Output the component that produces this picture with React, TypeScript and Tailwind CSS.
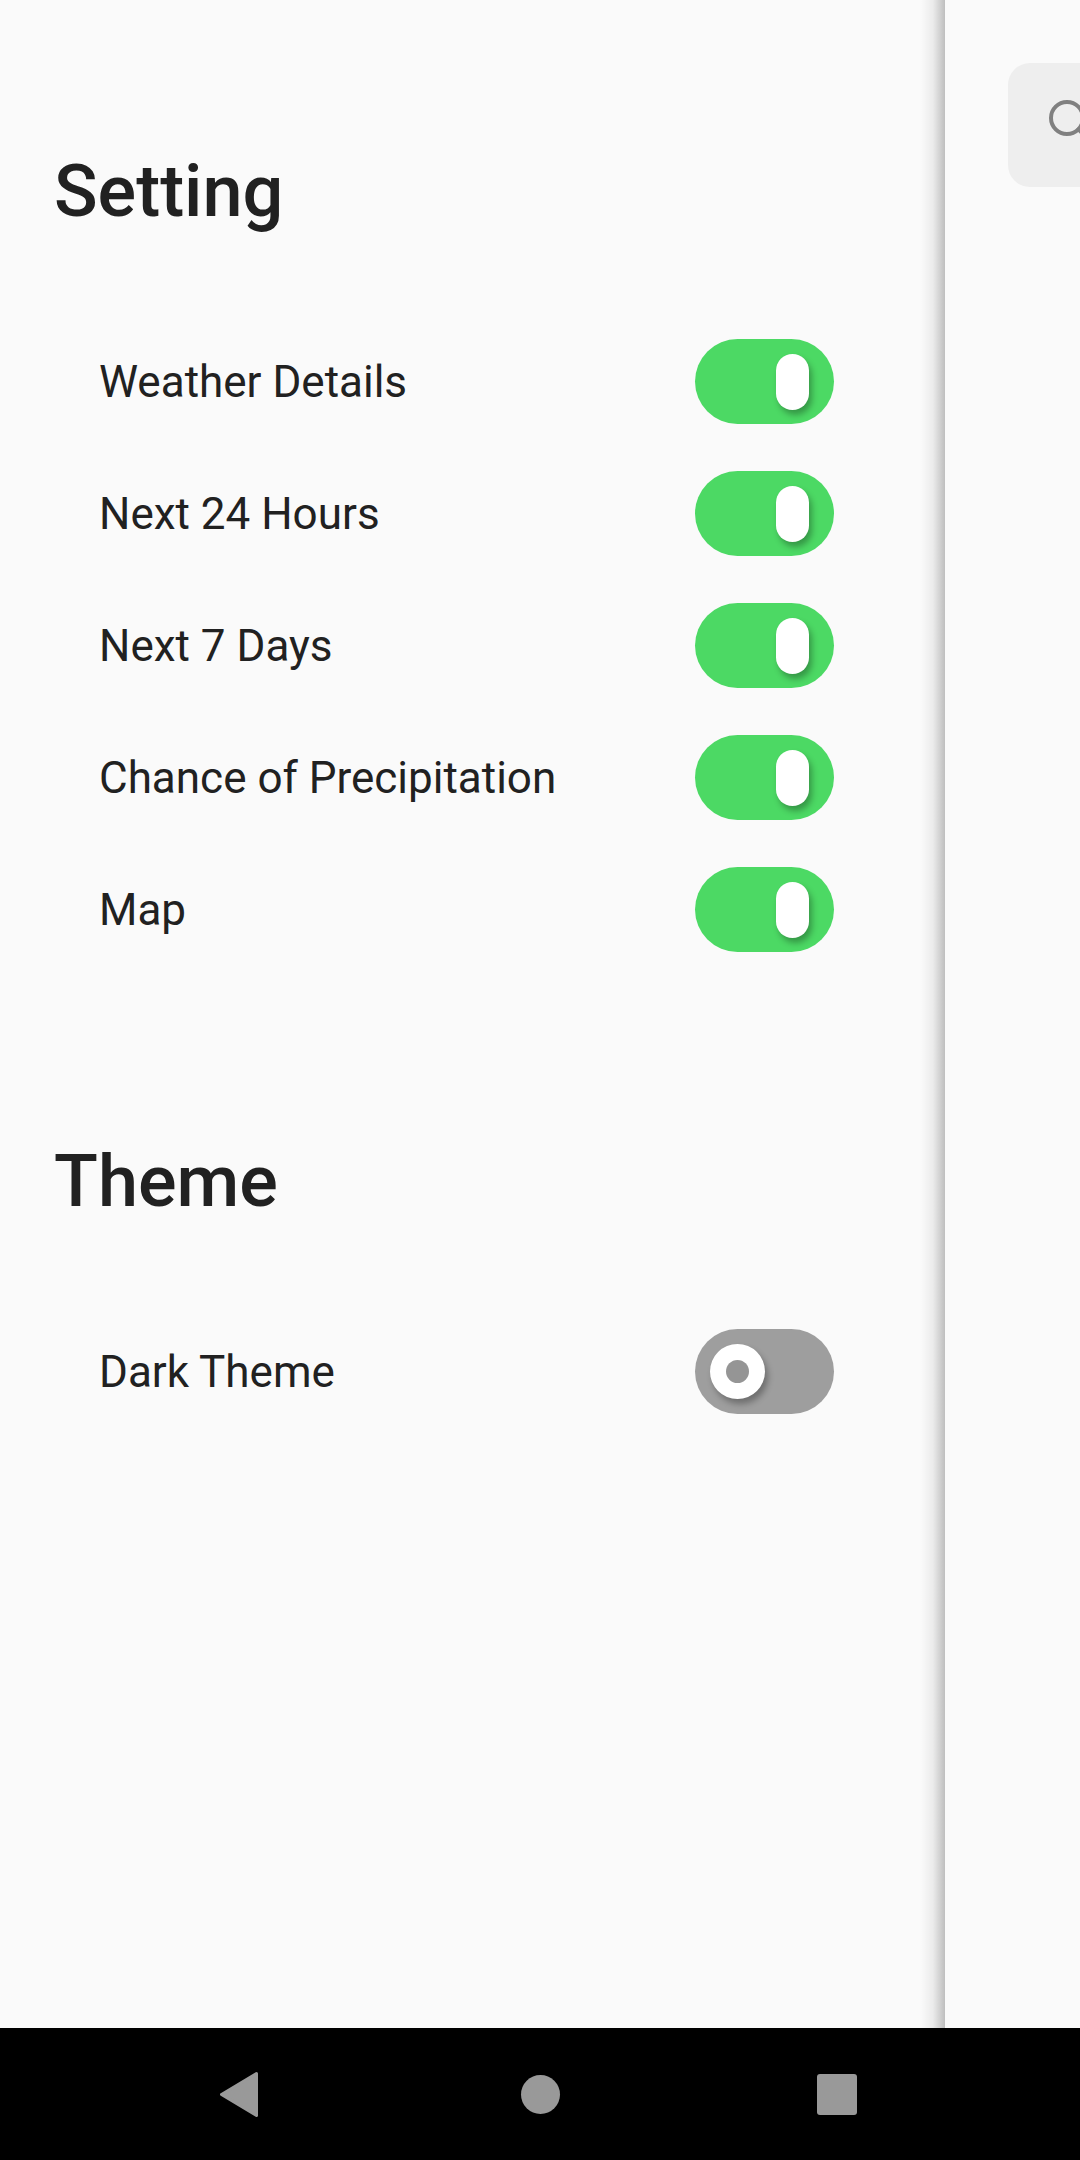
import React from 'react';
import { Search } from 'lucide-react';

const settingItems = ['Weather Details', 'Next 24 Hours', 'Next 7 Days', 'Chance of Precipitation', 'Map'];

const SwitchOn: React.FC = () => (
  <div className="w-[139px] h-[85px] rounded-full bg-[#4cd964] flex items-center justify-end pr-[25px]">
    <div className="w-[33px] h-[56px] rounded-full bg-white shadow-[3px_5px_6px_rgba(0,0,0,0.3)]" />
  </div>
);

const SwitchOff: React.FC = () => (
  <div className="w-[139px] h-[85px] rounded-full bg-[#9e9e9e] flex items-center pl-[15px]">
    <div className="w-[55px] h-[55px] rounded-full bg-white flex items-center justify-center shadow-[3px_5px_6px_rgba(0,0,0,0.3)]">
      <div className="w-[23px] h-[23px] rounded-full bg-[#959595]" />
    </div>
  </div>
);

const Row: React.FC<{ label: string; on: boolean }> = ({ label, on }) => (
  <div className="h-[132px] flex items-center justify-between pl-[99px] pr-[111px]">
    <span className="text-[44px] leading-none text-[#212121]">{label}</span>
    {on ? <SwitchOn /> : <SwitchOff />}
  </div>
);

export default function App() {
  return (
    <div
      className="w-[1080px] h-[2160px] flex flex-col bg-[#fafafa] overflow-hidden"
      style={{ fontFamily: 'Roboto, "Noto Sans", sans-serif' }}
    >
      <div className="flex flex-1 min-h-0">
        {/* Drawer */}
        <aside className="relative w-[945px] shrink-0">
          <h1 className="pl-[54px] pt-[156px] text-[72px] leading-none font-medium text-[#212121]">Setting</h1>
          <div className="mt-[87.5px]">
            {settingItems.map((item) => (
              <Row key={item} label={item} on />
            ))}
          </div>
          <h1 className="pl-[54px] mt-[170.5px] text-[72px] leading-none font-medium text-[#212121]">Theme</h1>
          <div className="mt-[87.5px]">
            <Row label="Dark Theme" on={false} />
          </div>
          {/* edge shadow */}
          <div className="absolute top-0 right-0 h-full w-[24px] bg-gradient-to-r from-transparent via-black/[0.06] to-black/[0.24]" />
        </aside>

        {/* Content behind the drawer */}
        <main className="flex-1 overflow-hidden pt-[63px] pl-[63px]">
          <div className="w-[400px] h-[124px] rounded-[22px] bg-[#eeeeee] pl-[37px] pt-[33px]">
            <Search size={48} strokeWidth={2} color="#808080" />
          </div>
        </main>
      </div>

      {/* System navigation bar */}
      <nav className="h-[132px] bg-black flex items-center pl-[220px]">
        <svg width="38" height="45" viewBox="0 0 38 45">
          <path d="M36.5 1.5 L1.5 22.5 L36.5 43.5 Z" fill="#999999" stroke="#999999" strokeWidth="3" strokeLinejoin="round" />
        </svg>
        <div className="ml-[263px] w-[39px] h-[39px] rounded-full bg-[#999999]" />
        <div className="ml-[257px] w-[40px] h-[41px] rounded-[3px] bg-[#999999]" />
      </nav>
    </div>
  );
}
